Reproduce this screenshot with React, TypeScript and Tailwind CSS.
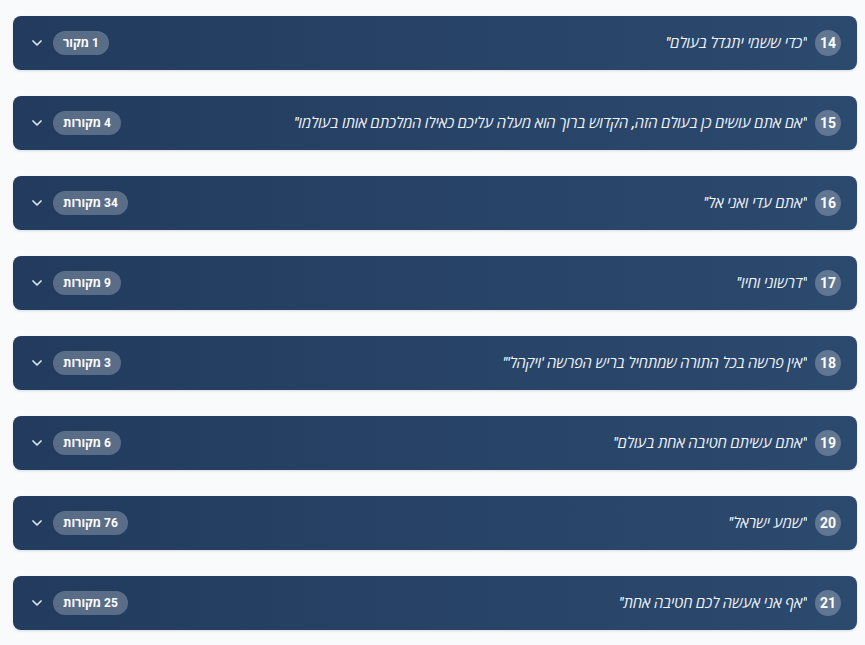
import React from "react";

const items = [
  { n: 14, title: "\"כדי ששמי יתגדל בעולם\"", badge: "1 מקור" },
  { n: 15, title: "\"אם אתם עושים כן בעולם הזה, הקדוש ברוך הוא מעלה עליכם כאילו המלכתם אותו בעולמו\"", badge: "4 מקורות" },
  { n: 16, title: "\"אתם עדי ואני אל\"", badge: "34 מקורות" },
  { n: 17, title: "\"דרשוני וחיו\"", badge: "9 מקורות" },
  { n: 18, title: "\"אין פרשה בכל התורה שמתחיל בריש הפרשה 'ויקהל'\"", badge: "3 מקורות" },
  { n: 19, title: "\"אתם עשיתם חטיבה אחת בעולם\"", badge: "6 מקורות" },
  { n: 20, title: "\"שמע ישראל\"", badge: "76 מקורות" },
  { n: 21, title: "\"אף אני אעשה לכם חטיבה אחת\"", badge: "25 מקורות" },
];

function Chevron() {
  return (
    <svg width="16" height="16" viewBox="0 0 24 24" fill="none" stroke="#e2e8f0" strokeWidth="2.5" strokeLinecap="round" strokeLinejoin="round">
      <path d="M6 9l6 6 6-6" />
    </svg>
  );
}

export default function App() {
  return (
    <div
      className="min-h-[645px] bg-[#f8fafc] pt-[16px] pl-[13px] pr-[8px]"
      style={{ fontFamily: "Roboto, 'Open Sans', sans-serif" }}
    >
      <div className="flex flex-col gap-[26px]">
        {items.map((it) => (
          <div
            key={it.n}
            dir="rtl"
            className="h-[54px] rounded-[8px] bg-gradient-to-r from-[#223b5e] to-[#2c4a6e] flex items-center px-4 shadow-sm"
          >
            <div className="w-[26px] h-[26px] rounded-full bg-white/25 flex items-center justify-center text-white text-[14px] font-bold shrink-0">
              {it.n}
            </div>
            <div className="mr-[8px] text-[#f1f5f9] text-[14.85px] italic font-medium truncate">
              {it.title}
            </div>
            <div className="flex-1" />
            <div className="h-[24px] rounded-full bg-white/25 px-[10px] flex items-center text-white text-[12px] font-bold shrink-0">
              {it.badge}
            </div>
            <div className="mr-[8px] flex items-center shrink-0">
              <Chevron />
            </div>
          </div>
        ))}
      </div>
    </div>
  );
}
